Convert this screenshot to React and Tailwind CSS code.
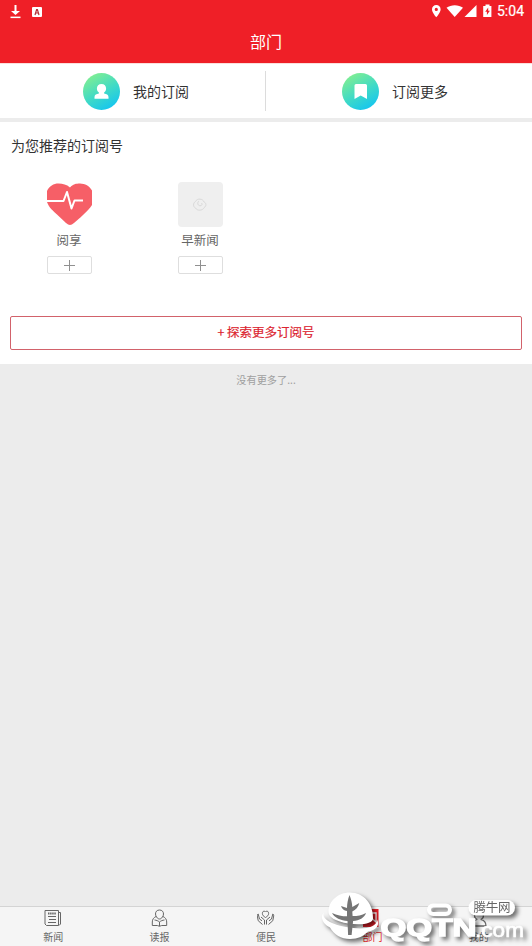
import React from 'react';

const StatusBar = () => (
  <div className="h-[22px] shrink-0 flex items-center justify-between pl-[10px] pr-[8px] text-white">
    <div className="flex items-center gap-[11px] pt-px">
      <svg width="11" height="14" viewBox="0 0 11 14" fill="#fff">
        <path d="M4.500 0h2v6H10L5.500 10 1 6h3.500z" />
        <rect x="0.500" y="11.600" width="10" height="1.500" />
      </svg>
      <svg width="10" height="10" viewBox="0 0 10 10">
        <rect width="10" height="10" rx="1" fill="#fff" />
        <path d="M3 8 4.600 2.500h.8L7 8M3.600 6h2.800" fill="none" stroke="#b3323a" strokeWidth="1.200" />
      </svg>
    </div>
    <div className="flex items-center">
      <svg width="62" height="14" viewBox="0 0 62 14" fill="#fff" className="mr-[3px] -ml-px">
        <path
          fillRule="evenodd"
          d="M4.300 1A4.300 4.300 0 0 0 0 5.400c0 3.200 4.300 7.800 4.300 7.800s4.300-4.600 4.300-7.800A4.300 4.300 0 0 0 4.300 1zm0 2.800a1.600 1.600 0 1 1 0 3.200 1.600 1.600 0 0 1 0-3.200z"
        />
        <path d="M14.500 3.800C19 .4 26.500.4 31 3.800L22.700 13z" />
        <path d="M44.500 1v12h-12z" />
        <path
          fillRule="evenodd"
          d="M53.500.6h4v1.400h1.900v11H51.200V2h2.300zM56.200 3.600l-3 4.100h1.700v3.200l3-4.200h-1.700z"
        />
      </svg>
      <span className="text-[14px] leading-none font-normal [-webkit-text-stroke:0.2px_white] font-[Roboto,sans-serif]">
        5:04
      </span>
    </div>
  </div>
);

const entries = [
  {
    label: '我的订阅',
    id: 'mine',
    icon: (
      <path d="M18.500 11c-2.900 0-4.600 1.900-4.600 4.500 0 2 .8 3.200 2 4.100v1c-2.400.5-4.400 1.300-4.400 3.300v1.800h14v-1.800c0-2-2-2.800-4.400-3.300v-1c1.200-.9 2-2.100 2-4.100 0-2.600-1.700-4.500-4.600-4.500z" />
    ),
  },
  {
    label: '订阅更多',
    id: 'more',
    icon: <path d="M14 11h9.500a1.500 1.500 0 0 1 1.500 1.500V26l-6.300-3.600L12.500 26V12.500A1.500 1.500 0 0 1 14 11z" />,
  },
];

const EntryIcon = ({ id, children }) => (
  <svg width="37" height="37" viewBox="0 0 37 37">
    <defs>
      <linearGradient id={id} x1="0.2" y1="0.05" x2="0.75" y2="1">
        <stop offset="0" stopColor="#80ee92" />
        <stop offset="0.5" stopColor="#42dbc4" />
        <stop offset="1" stopColor="#12c4f2" />
      </linearGradient>
    </defs>
    <circle cx="18.500" cy="18.500" r="18.500" fill={`url(#${id})`} />
    <g fill="#fff">{children}</g>
  </svg>
);

const HeartIcon = () => (
  <svg width="45" height="45" viewBox="0 0 45 45">
    <path
      d="M23 5.500C26 2 29 1.500 33 1.500c5 .1 9.500 2.500 12 7v14.500c-2 3.500-5.500 6.700-9 10-3 2.800-6.500 6-9 8-3 2.500-5 2.500-8 0-3-2.700-6-5.700-9-8.500C6.500 29 2 26 0 20V9c2.300-5 6.500-7.500 11.500-7.500 4.500 0 8 1 11.500 4z"
      fill="#f65f67"
    />
    <path d="M0 19h16.500l3.500-9 4.500 16.500 3-8H36" fill="none" stroke="#fff" strokeWidth="2" strokeLinejoin="round" />
  </svg>
);

const PlaceholderIcon = () => (
  <div className="size-[45px] rounded-[4px] bg-[#efefef] flex items-center justify-center">
    <svg width="16" height="14" viewBox="0 0 16 14" fill="none" stroke="#d9d9d9" strokeWidth="1">
      <path d="M3.500 3.500C5 0 11 .5 12 4c2.500 1 2.500 4 .3 5.500C10.500 13 5 13 3.500 10 1 9 .8 5 3.500 3.500z" />
      <path d="M7 3c-2 1.500-1.500 4.500 1 4.800 2 .2 2.800-2 1.300-2.800" />
    </svg>
  </div>
);

const accounts = [
  { name: '阅享', icon: <HeartIcon /> },
  { name: '早新闻', icon: <PlaceholderIcon /> },
];

const tabs = [
  {
    label: '新闻',
    icon: (
      <>
        <path d="M1 1.500h13.500v15h-12L1 15zM14.500 3.500h2v11.500l-1.500 1.500" />
        <path d="M4 4.500h8" strokeWidth="1.800" strokeDasharray="1.500 .6" />
        <path d="M4 7.500h8M5 10.500h7M4 13.500h8" />
      </>
    ),
  },
  {
    label: '读报',
    icon: (
      <>
        <path d="M8.500 1c-2.600 0-4 1.700-4 4 0 1.400.6 2.400 1.200 3.200C6.500 9.500 7.500 10 8.500 10s2-.5 2.800-1.800c.6-.8 1.200-1.800 1.200-3.200 0-2.300-1.400-4-4-4z" />
        <path d="M5 7.500c-2.300 1-3.700 3-3.700 5.500v3.500h5l2.200.8 2.200-.8h5V13c0-2.500-1.400-4.500-3.700-5.500M3.500 11c2 .2 3.500.8 5 2 1.500-1.200 3-1.800 5-2M8.500 13v4" />
      </>
    ),
  },
  {
    label: '便民',
    icon: (
      <g transform="translate(-0.5 0.5)">
        <path d="M9 8C7 6.800 5.900 5.800 5.900 4c0-2.800 2.500-2.900 3.100-1.500.6-1.400 3.100-1.300 3.100 1.500C12.100 5.800 11 6.800 9 8z" />
        <path d="M1.700 4.500c-1.200.5-.9 1.700-.7 3l.7 3.700L6 15M1.700 4.500l1.300 5 2.500 1.800M4.500 7.500 8 10.500V15M16.300 4.500c1.200.5.9 1.700.7 3l-.7 3.700L12 15M16.300 4.500l-1.300 5-2.500 1.800M13.500 7.500 10 10.500V15" />
      </g>
    ),
  },
  {
    label: '部门',
    active: true,
    icon: (
      <>
        <path d="M0 0h15.500v18H0z" fill="#e21f28" stroke="none" />
        <path d="M6 4h7v9L6 7" stroke="#fff" strokeWidth="1.300" />
      </>
    ),
  },
  {
    label: '我的',
    icon: (
      <g strokeWidth="1.300">
        <path d="M9 .8c-5.500 0-5.500 9-1.700 9.500C4 11 2 13 2 17h14c0-4-2-6-5.300-6.700C14.500 9.800 14.500.8 9 .8z" />
      </g>
    ),
  },
];

const Watermark = () => (
  <svg
    className="absolute right-0 bottom-0 pointer-events-none overflow-visible drop-shadow-[3px_3px_2px_rgba(0,0,0,0.55)]"
    width="222"
    height="66"
    viewBox="0 0 222 66"
  >
    <path d="M40 12.500c-12 0-21.500 8.500-21.500 19.500 0 5 7 9.500 20 11.500 13 2 24.500 0 24.500-5 .5-14-9-26-23-26z" fill="#fff" />
    <path
      d="M14 32.500c-3.500 5 6 11.500 22 14.500s31 1.500 31-7.500c3.500 6-2 11-9 12-4 4.500-10 7.500-18 7.500-9 0-16-4.500-20-11.500C13 44 9.500 37 14 32.500z"
      fill="#fff"
    />
    <path
      d="M39.500 15c1.800 4.500 2.600 8 2.800 12l7-4c-1 4-3.500 7-7 8.500l.3 4.500c5 0 9-.5 13.500-3-2 5-6.500 7.500-13 8l-1.500 14h-3.500L37.500 41c-6.500-.5-13-3-15.500-8 5 2.500 10 3.300 15 3.300v-5.300c-3-.5-5-2-6-5l6 2c0-4 .8-8.500 2.500-13z"
      fill="#757575"
    />
    <rect x="119" y="25.500" width="21" height="8.500" rx="4.200" fill="none" stroke="#fff" strokeWidth="4" />
    <text
      x="70.500"
      y="56"
      fontSize="23"
      fontWeight="700"
      fill="#fff"
      stroke="#fff"
      strokeWidth="1.300"
      fontFamily="'Liberation Sans', sans-serif"
      textLength="96"
      lengthAdjust="spacingAndGlyphs"
    >
      QQTN
    </text>
    <rect x="158.500" y="20" width="46.500" height="15.500" rx="7.700" fill="#fff" />
    <text x="163.500" y="32" fontSize="12.500" fill="#666" fontFamily="'Noto Sans CJK SC', sans-serif" textLength="37">
      腾牛网
    </text>
    <text
      x="165"
      y="57"
      fontSize="21"
      fill="#fff"
      stroke="#fff"
      strokeWidth="0.600"
      fontFamily="'Liberation Sans', sans-serif"
      textLength="49"
      lengthAdjust="spacingAndGlyphs"
    >
      .com
    </text>
  </svg>
);

const App = () => {
  return (
    <div className="relative h-[946px] w-full flex flex-col overflow-hidden bg-[#ececec] font-['Noto_Sans_CJK_SC',sans-serif]">
      <header className="h-[64px] shrink-0 flex flex-col bg-[#ef1f27] border-b border-[#fbdfdc]">
        <StatusBar />
        <h1 className="flex-1 flex items-center justify-center pb-[3px] text-[16px] leading-none text-white">部门</h1>
      </header>

      <div className="h-[58px] shrink-0 flex items-center bg-white border-b-4 border-[#ececec]">
        {entries.map((entry, i) => (
          <div
            key={entry.id}
            className={
              i === 0
                ? 'flex items-center gap-[13px] w-[266px] h-[40px] pl-[83px] border-r border-[#dcdcdc]'
                : 'flex items-center gap-[13px] flex-1 h-[40px] pl-[76px]'
            }
          >
            <EntryIcon id={entry.id}>{entry.icon}</EntryIcon>
            <span className="text-[14px] leading-5 text-[#333]">{entry.label}</span>
          </div>
        ))}
      </div>

      <section className="h-[242px] shrink-0 bg-white px-[10px] pt-[13px] pb-[14px] flex flex-col">
        <h2 className="pl-px text-[14px] leading-5 text-[#333]">为您推荐的订阅号</h2>
        <div className="flex mt-[27px]">
          {accounts.map((account) => (
            <div key={account.name} className="w-[131px] flex flex-col items-center pr-[13px]">
              {account.icon}
              <span className="mt-[4px] text-[12.5px] leading-[18px] text-[#666]">{account.name}</span>
              <button className="mt-[7px] w-[45px] h-[18px] flex items-center justify-center rounded-[2px] border border-[#dedede]">
                <svg width="11" height="11" viewBox="0 0 11 11" stroke="#909090">
                  <path d="M5.500 0v11M0 5.500h11" />
                </svg>
              </button>
            </div>
          ))}
        </div>
        <button className="mt-auto h-[34px] w-full rounded-[2px] border border-[#d2626b] pb-px text-[12.5px] leading-none text-[#dc2430] [-webkit-text-stroke:0.2px_#dc2430]">
          + 探索更多订阅号
        </button>
      </section>

      <p className="flex-1 pt-[8px] text-center text-[10.2px] leading-4 text-[#a0a0a0]">没有更多了...</p>

      <nav className="h-[40px] shrink-0 flex bg-[#f5f5f5] border-t border-[#d4d4d4]">
        {tabs.map((tab) => (
          <div
            key={tab.label}
            className={
              tab.active
                ? 'flex-1 flex flex-col items-center pt-[2px] text-[#e21f28]'
                : 'flex-1 flex flex-col items-center pt-[2px] text-[#666]'
            }
          >
            <svg width="18" height="18" viewBox="0 0 18 18" fill="none" stroke="currentColor" strokeWidth="1">
              {tab.icon}
            </svg>
            <span className="mt-[3px] text-[10px] leading-[14px]">{tab.label}</span>
          </div>
        ))}
      </nav>

      <Watermark />
    </div>
  );
};

export default App;
